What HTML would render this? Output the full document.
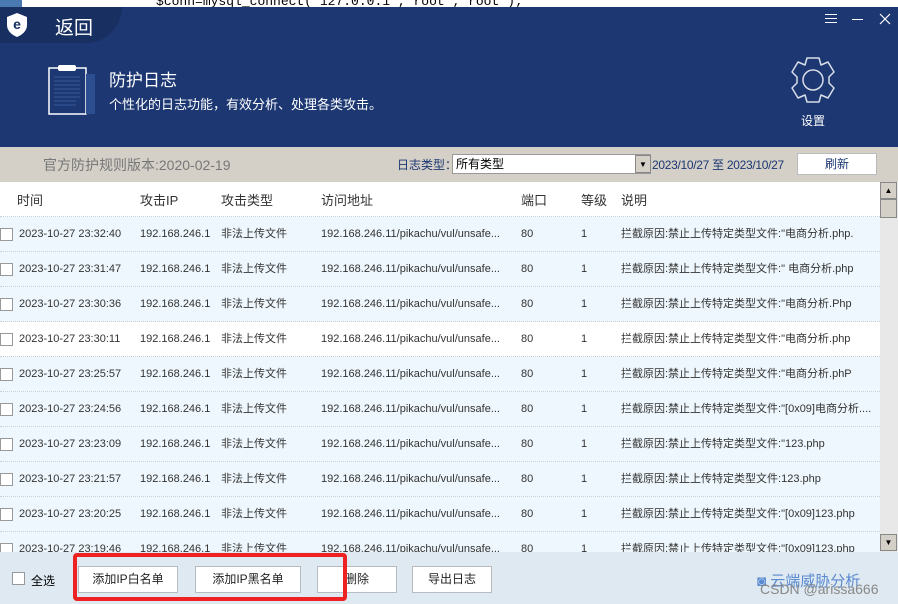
<!DOCTYPE html>
<html><head><meta charset="utf-8"><style>
*{margin:0;padding:0;box-sizing:border-box}
body{width:898px;height:604px;overflow:hidden;position:relative;background:#fff;font-family:"Liberation Sans","Noto Sans CJK SC",sans-serif;font-size:12px}
.abs{position:absolute}
.top{left:0;top:0;width:898px;height:7px;background:#fff;overflow:hidden;font-family:"Liberation Mono",monospace;font-size:13px;line-height:4px}
.hdr{left:0;top:7px;width:898px;height:140px;background:#1c3772}
.back{left:0;top:7px;width:122px;height:36px;background:#172f61;border-radius:0 0 40px 0}
.gray{left:0;top:147px;width:898px;height:35px;background:#d4d0c8}
.th{top:182px;height:35px;line-height:38px;font-size:13px;color:#333}
.row{left:0;width:880px;height:35px;border-bottom:1px dotted #c8d0d8;background:#eef7fd;font-size:11px;color:#333}
.row span{position:absolute;top:0;line-height:34px;white-space:nowrap}
.cb{position:absolute;left:0;top:11px;width:13px;height:13px;border:1px solid #999;background:#fff}
.bot{left:0;top:552px;width:898px;height:52px;background:#dfe9f1}
.btn{top:566px;height:27px;background:#fff;border:1px solid #b8bcc0;line-height:25px;text-align:center;font-size:12px;color:#222}
</style></head><body>
<div class="abs top">&nbsp;&nbsp;&nbsp;&nbsp;&nbsp;&nbsp;&nbsp;&nbsp;&nbsp;&nbsp;&nbsp;&nbsp;&nbsp;&nbsp;&nbsp;&nbsp;&nbsp;&nbsp;&nbsp;&nbsp;$conn=mysql_connect('127.0.0.1','root','root');</div>
<div class="abs" style="left:0;top:0;width:22px;height:7px;background:#4a78b0"></div>
<div class="abs hdr"></div>
<div class="abs back"></div>
<svg class="abs" style="left:5px;top:12px" width="24" height="26" viewBox="0 0 24 26"><path d="M12 1 L22 5 V13 C22 19 17 23 12 25 C7 23 2 19 2 13 V5 Z" fill="#fff"/><text x="12" y="17" text-anchor="middle" font-size="14" font-weight="bold" fill="#172f61" font-family="Liberation Sans">e</text></svg>
<div class="abs" style="left:55px;top:13px;color:#fff;font-size:19px">返回</div>
<div class="abs" style="left:825px;top:14px;width:12px;height:9px;border-top:1px solid #fff;border-bottom:1px solid #fff"></div>
<div class="abs" style="left:825px;top:18px;width:12px;height:1px;background:#fff"></div>
<div class="abs" style="left:852px;top:19px;width:11px;height:1px;background:#fff"></div>
<svg class="abs" style="left:879px;top:13px" width="12" height="12"><path d="M1 1 L11 11 M11 1 L1 11" stroke="#fff" stroke-width="1.2"/></svg>
<svg class="abs" style="left:48px;top:62px" width="50" height="54"><rect x="1" y="6" width="37" height="46" fill="none" stroke="#fff" stroke-width="1.5"/><rect x="38" y="12" width="9" height="40" fill="#2e4f8f"/><rect x="10" y="3" width="18" height="6" rx="2" fill="#fff"/><g stroke="#3a5a9a" stroke-width="1"><line x1="6" y1="15" x2="32" y2="15"/><line x1="6" y1="19" x2="32" y2="19"/><line x1="6" y1="23" x2="32" y2="23"/><line x1="6" y1="27" x2="32" y2="27"/><line x1="6" y1="31" x2="32" y2="31"/><line x1="6" y1="35" x2="32" y2="35"/><line x1="6" y1="39" x2="28" y2="39"/><line x1="6" y1="43" x2="28" y2="43"/></g></svg>
<div class="abs" style="left:109px;top:66px;color:#fff;font-size:17px">防护日志</div>
<div class="abs" style="left:109px;top:94px;color:#fff;font-size:13px">个性化的日志功能，有效分析、处理各类攻击。</div>
<svg class="abs" style="left:788px;top:55px" width="50" height="50" viewBox="0 0 50 50"><path d="M19 3 H31 L33 10 L40 7 L46 17 L41 22 V28 L46 33 L40 43 L33 40 L31 47 H19 L17 40 L10 43 L4 33 L9 28 V22 L4 17 L10 7 L17 10 Z" fill="none" stroke="#d8dde8" stroke-width="1.5" stroke-linejoin="round"/><circle cx="25" cy="25" r="10" fill="none" stroke="#d8dde8" stroke-width="1.5"/></svg>
<div class="abs" style="left:801px;top:112px;color:#fff;font-size:12px">设置</div>
<div class="abs gray"></div>
<div class="abs" style="left:43px;top:155px;color:#777;font-size:14px">官方防护规则版本:2020-02-19</div>
<div class="abs" style="left:397px;top:156px;color:#1c3772;font-size:12px">日志类型：</div>
<div class="abs" style="left:452px;top:154px;width:199px;height:20px;background:#fff;border:1px solid #999;font-size:12px;line-height:18px;padding-left:3px">所有类型</div>
<div class="abs" style="left:635px;top:155px;width:16px;height:18px;background:#d4d0c8;border:1px solid #888;font-size:8px;text-align:center;line-height:18px">▼</div>
<div class="abs" style="left:652px;top:156px;color:#1c3772;font-size:12px;letter-spacing:-0.3px">2023/10/27 至 2023/10/27</div>
<div class="abs" style="left:797px;top:153px;width:80px;height:22px;background:#fff;border:1px solid #bbb;color:#1c3772;text-align:center;line-height:20px;font-size:12px">刷新</div>
<div class="abs th" style="left:17px">时间</div>
<div class="abs th" style="left:140px">攻击IP</div>
<div class="abs th" style="left:221px">攻击类型</div>
<div class="abs th" style="left:321px">访问地址</div>
<div class="abs th" style="left:521px">端口</div>
<div class="abs th" style="left:581px">等级</div>
<div class="abs th" style="left:621px">说明</div>
<div class="abs" style="left:0;top:216px;width:880px;border-top:1px dotted #c8d0d8"></div>
<div class="abs" style="left:880px;top:182px;width:18px;height:370px;background:#e8e8e8"></div>
<div class="abs" style="left:880px;top:182px;width:17px;height:17px;background:#d4d0c8;border:1px solid #888;font-size:8px;text-align:center;line-height:15px">▲</div>
<div class="abs" style="left:880px;top:199px;width:17px;height:19px;background:#d4d0c8;border:1px solid #888"></div>
<div class="abs" style="left:880px;top:534px;width:17px;height:17px;background:#d4d0c8;border:1px solid #888;font-size:8px;text-align:center;line-height:15px">▼</div>
<div id="rows"></div>
<div class="abs bot"></div>
<div class="abs" style="left:12px;top:572px;width:13px;height:13px;border:1px solid #999;background:#fff"></div>
<div class="abs" style="left:31px;top:572px;font-size:12px">全选</div>
<div class="abs btn" style="left:78px;width:100px">添加IP白名单</div>
<div class="abs btn" style="left:195px;width:106px">添加IP黑名单</div>
<div class="abs btn" style="left:317px;width:80px">删除</div>
<div class="abs btn" style="left:412px;width:80px">导出日志</div>
<div class="abs" style="left:73px;top:553px;width:274px;height:48px;border:4px solid #ee2222;border-radius:4px"></div>
<div class="abs" style="left:757px;top:570px;color:#5a8ad0;font-size:15px">◙ 云端威胁分析</div>
<div class="abs" style="left:760px;top:581px;color:#888;font-size:14px">CSDN @arissa666</div>
<script>
var d=[["23:32:40","\"电商分析.php."],["23:31:47","\" 电商分析.php"],["23:30:36","\"电商分析.Php"],["23:30:11","\"电商分析.php"],["23:25:57","\"电商分析.phP"],["23:24:56","\"[0x09]电商分析...."],["23:23:09","\"123.php"],["23:21:57","123.php"],["23:20:25","\"[0x09]123.php"],["23:19:46","\"[0x09]123.php"]];
var h="";d.forEach(function(r,i){var y=217+i*35;h+='<div class="abs row" style="top:'+y+'px;'+(i==3?'background:#fff':'')+'"><div class="cb"></div><span style="left:19px">2023-10-27 '+r[0]+'</span><span style="left:140px">192.168.246.1</span><span style="left:221px">非法上传文件</span><span style="left:321px">192.168.246.11/pikachu/vul/unsafe...</span><span style="left:521px">80</span><span style="left:581px">1</span><span style="left:621px">拦截原因:禁止上传特定类型文件:'+r[1]+'</span></div>'});
document.getElementById("rows").innerHTML=h;
</script>
</body></html>
